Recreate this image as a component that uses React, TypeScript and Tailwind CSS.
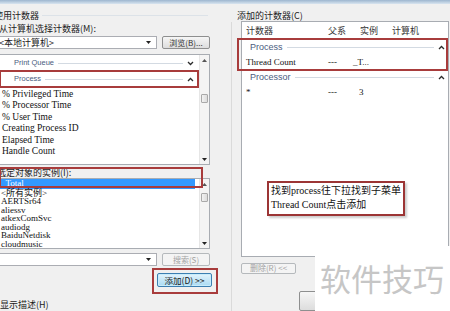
import React from 'react';

const Chevron = ({ up }: { up?: boolean }) => (
  <svg width="7" height="5" viewBox="0 0 7 5" className="shrink-0">
    <path d={up ? 'M1 4 L3.5 1.5 L6 4' : 'M1 1 L3.5 3.5 L6 1'} fill="none" stroke="#2b2b2b" strokeWidth="1.3" />
  </svg>
);

const Caret = () => (
  <svg width="5" height="3" viewBox="0 0 5 3" className="shrink-0">
    <path d="M0 0 H5 L2.5 3 Z" fill="#222" />
  </svg>
);

const ScrollBar = ({ thumb }: { thumb: string }) => (
  <div className="w-[10px] flex flex-col bg-[#f4f4f4] border-l border-[#e6e6e6]">
    <div className="h-[10px] flex items-center justify-center">
      <svg width="5" height="3" viewBox="0 0 5 3"><path d="M0 3 H5 L2.5 0 Z" fill="#555" /></svg>
    </div>
    <div className="flex-1">
      <div className={`${thumb} mx-[1px] h-[9px] rounded-[1px] border border-[#a9a9a9] bg-gradient-to-r from-[#f2f2f2] to-[#dcdcdc]`} />
    </div>
    <div className="h-[10px] flex items-center justify-center">
      <Caret />
    </div>
  </div>
);

const GroupRow = ({ label, up, size }: { label: string; up?: boolean; size: string }) => (
  <div className="h-[16px] flex items-center">
    <span className={`${size} text-[#4a5d80] font-['Liberation_Sans',sans-serif] leading-none`}>{label}</span>
    <div className="flex-1 h-px bg-[#d3dae2] ml-[4px]" />
    <div className="ml-[4px]">
      <Chevron up={up} />
    </div>
  </div>
);

const counters = [
  '% Privileged Time',
  '% Processor Time',
  '% User Time',
  'Creating Process ID',
  'Elapsed Time',
  'Handle Count',
];

const instances = ['<所有实例>', 'AERTSr64', 'aliessv', 'atkexComSvc', 'audiodg', 'BaiduNetdisk', 'cloudmusic'];

const serif = "font-['Liberation_Serif','Noto_Sans_CJK_SC',serif]";

const LeftPane = () => (
  <div className="w-[222px] shrink-0 flex flex-col text-[9px] text-[#1b1b1b]">
    <div className="mt-[6px] h-[11px] flex items-center -ml-[6px] pr-[14px]">
      <span className="leading-none">使用计数器</span>
      <div className="flex-1 h-px bg-[#dce2e8] ml-[3px]" />
    </div>
    <div className="mt-[2px] h-[11px] flex items-center -ml-[1px] leading-none">从计算机选择计数器(M):</div>

    <div className="mt-[2px] h-[13px] flex">
      <div className="-ml-[4px] w-[161px] bg-white border border-[#abadb3] flex items-center pl-[2px] pr-[5px]">
        <span className="flex-1 leading-none">&lt;本地计算机&gt;</span>
        <Caret />
      </div>
      <button className="ml-[5px] w-[48px] rounded-[2px] border border-[#8e8f8f] bg-gradient-to-b from-[#f6f6f6] to-[#dddddd] text-[8px] leading-none text-[#333]">
        浏览(B)...
      </button>
    </div>

    <div className="-ml-[3px] mt-[5px] h-[111px] w-[213px] bg-white border border-[#a8acb2] flex">
      <div className="flex-1 flex flex-col pr-[5px]">
        <div className="pl-[16px]">
          <GroupRow label="Print Queue" size="text-[7.5px]" />
          <GroupRow label="Process" up size="text-[7.5px]" />
        </div>
        <div className={`pt-[1.5px] pl-[4px] ${serif} text-[9.5px] text-[#111]`}>
          {counters.map((c) => (
            <div key={c} className="h-[11.6px] leading-[11.6px] whitespace-nowrap">{c}</div>
          ))}
        </div>
      </div>
      <ScrollBar thumb="mt-[29px]" />
    </div>

    <div className="mt-[2px] h-[11px] flex items-center -ml-[3px] leading-none">选定对象的实例(I):</div>

    <div className="-ml-[3px] h-[71px] w-[213px] bg-white border border-[#a8acb2] flex">
      <div className={`flex-1 flex flex-col overflow-hidden ${serif} text-[9px] text-[#111]`}>
        <div className="mr-[4px] h-[9.5px] leading-[9.5px] bg-[#3399ff] text-white pl-[3px]">_Total</div>
        {instances.map((i) => (
          <div key={i} className="h-[8.6px] leading-[8.6px] pl-[3px] whitespace-nowrap">{i}</div>
        ))}
      </div>
      <ScrollBar thumb="mt-[4px]" />
    </div>

    <div className="mt-[4px] h-[13px] flex">
      <div className="-ml-[4px] w-[161px] bg-white border border-[#abadb3] flex items-center justify-end pr-[5px]">
        <Caret />
      </div>
      <button className="ml-[5px] w-[48px] rounded-[2px] border border-[#b5b9bc] bg-[#f4f4f4] text-[8px] leading-none text-[#a3a3a3]">
        搜索(S)
      </button>
    </div>

    <div className="mt-[7px] h-[14px] flex">
      <button className="ml-[157px] w-[55px] rounded-[2px] border border-[#3c7fb1] bg-gradient-to-b from-[#e3f4fc] to-[#a9daf2] text-[8.5px] leading-none text-[#1a1a1a] shadow-[inset_0_0_0_1px_#c8ecfb]">
        添加(D) &gt;&gt;
      </button>
    </div>

    <div className="mt-[12px] h-[10px] flex items-center leading-none">显示描述(H)</div>
  </div>
);

const RightPane = () => (
  <div className="flex-1 flex flex-col text-[9px] text-[#1b1b1b]">
    <div className="mt-[6px] h-[11px] flex items-center ml-[5px] leading-none">添加的计数器(C)</div>
    <div className="mt-[1px] ml-[9px] h-[247px] w-[208px] bg-white border border-[#a8acb2] flex flex-col pr-[3px]">
      <div className="h-[17px] flex items-center pl-[4px] text-[#333] leading-none">
        <span className="w-[82px]">计数器</span>
        <span className="w-[32px]">父系</span>
        <span className="w-[32px]">实例</span>
        <span>计算机</span>
      </div>
      <div className="h-[17px] pl-[8px]">
        <GroupRow label="Process" up size="text-[9px]" />
      </div>
      <div className={`h-[13px] flex items-center pl-[4px] ${serif} text-[9px] text-[#111] leading-none`}>
        <span className="w-[82px]">Thread Count</span>
        <span className="w-[25px]">---</span>
        <span>_T...</span>
      </div>
      <div className="h-[17px] pl-[8px]">
        <GroupRow label="Processor" up size="text-[9px]" />
      </div>
      <div className={`h-[12px] flex items-center pl-[4px] ${serif} text-[9px] text-[#111] leading-none`}>
        <span className="w-[82px]">*</span>
        <span className="w-[31px]">---</span>
        <span>3</span>
      </div>
    </div>
    <div className="mt-[6px] h-[12px] flex">
      <button className="ml-[9px] w-[55px] rounded-[2px] border border-[#b5b9bc] bg-[#f4f4f4] text-[8px] leading-none text-[#a3a3a3]">
        删除(R) &lt;&lt;
      </button>
    </div>
    <div className="mt-[17px] ml-[67px] h-[20px] w-[60px] shrink-0 rounded-[2px] border border-[#8e8f8f] bg-gradient-to-b from-[#f6f6f6] to-[#dddddd]" />
  </div>
);

export default function App() {
  return (
    <div className="relative w-[450px] h-[311px] overflow-hidden bg-[#f0f0f0] font-['Noto_Sans_CJK_SC',sans-serif]">
      <div className="h-[4px] bg-gradient-to-b from-[#9db6cf] to-[#d9e5f0]" />
      <div className="flex h-[307px]">
        <LeftPane />
        <div className="w-[10px] shrink-0 flex justify-end">
          <div className="w-px mt-[18px] bg-[#dadada]" />
        </div>
        <RightPane />
      </div>

      {/* red highlight boxes */}
      <div className="absolute left-[-1px] top-[70px] w-[200px] h-[18px] border-2 border-[#a83c3c]" />
      <div className="absolute left-[-1px] top-[167px] w-[204px] h-[21px] border-2 border-[#a83c3c]" />
      <div className="absolute left-[152px] top-[268px] w-[66px] h-[26px] border-2 border-[#a83c3c]" />
      <div className="absolute left-[237px] top-[38px] w-[211px] h-[33px] border-2 border-[#a83c3c]" />

      {/* note */}
      <div className={`absolute left-[267px] top-[181px] w-[138px] h-[35px] border-2 border-[#9c3535] bg-white shadow-[2px_2px_2px_rgba(0,0,0,0.2)] pl-[2px] pt-[1px] ${serif} text-[10px] leading-[14px] text-[#111] whitespace-nowrap`}>
        <div>找到process往下拉找到子菜单</div>
        <div>Thread Count点击添加</div>
      </div>

      {/* watermark */}
      <div className="absolute left-[315px] top-[246px] w-[135px] h-[65px] bg-white flex items-center pl-[5px] pb-[2px]">
        <span className="text-[31px] leading-none text-[#c6c6c6] tracking-[0px]">软件技巧</span>
      </div>
    </div>
  );
}
